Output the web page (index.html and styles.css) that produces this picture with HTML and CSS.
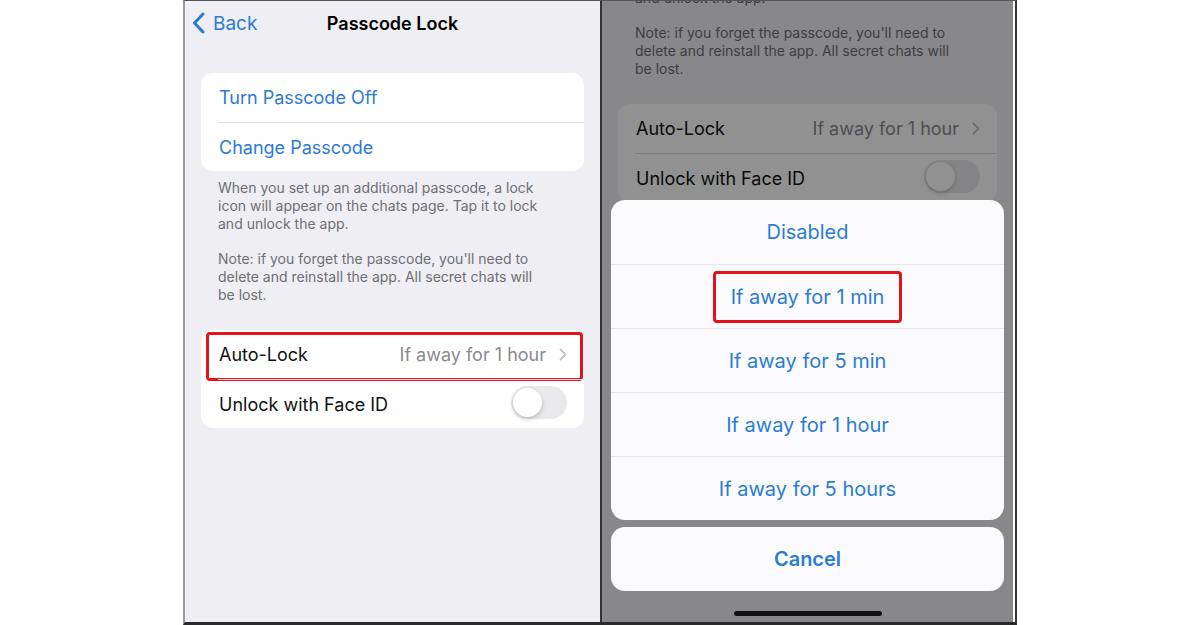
FILE: index.html
```html
<!DOCTYPE html>
<html lang="en">
<head>
    <meta charset="UTF-8">
    <meta name="viewport" content="width=device-width, initial-scale=1.0">
    <title>Passcode Lock</title>
    <link rel="stylesheet" href="styles.css">
</head>
<body>
    <div class="frame">
        <section class="phone">
            <div class="page">
                <header class="nav">
                    <a href="#" class="back">
                        <svg width="13" height="22" viewBox="0 0 13 22"><path d="M11 2 L2.5 11 L11 20" fill="none" stroke="currentColor" stroke-width="3" stroke-linecap="round" stroke-linejoin="round"/></svg>
                        Back
                    </a>
                    <h1>Passcode Lock</h1>
                </header>
                <div class="group">
                    <div class="row link">Turn Passcode Off</div>
                    <div class="row link">Change Passcode</div>
                </div>
                <div class="footnote">
                    <p>When you set up an additional passcode, a lock<br>icon will appear on the chats page. Tap it to lock<br>and unlock the app.</p>
                    <p>Note: if you forget the passcode, you'll need to<br>delete and reinstall the app. All secret chats will<br>be lost.</p>
                </div>
                <div class="group second">
                    <div class="row marked">
                        <span>Auto-Lock</span>
                        <span class="value">If away for 1 hour
                            <svg width="8" height="13" viewBox="0 0 8 13"><path d="M1.5 1.5 L6.5 6.5 L1.5 11.5" fill="none" stroke="currentColor" stroke-width="1.8" stroke-linecap="round" stroke-linejoin="round"/></svg>
                        </span>
                    </div>
                    <div class="row">
                        <span>Unlock with Face ID</span>
                        <span class="switch"><span class="knob"></span></span>
                    </div>
                </div>
            </div>
        </section>

        <section class="phone">
            <div class="page scrolled">
                <header class="nav">
                    <a href="#" class="back">
                        <svg width="13" height="22" viewBox="0 0 13 22"><path d="M11 2 L2.5 11 L11 20" fill="none" stroke="currentColor" stroke-width="3" stroke-linecap="round" stroke-linejoin="round"/></svg>
                        Back
                    </a>
                    <h1>Passcode Lock</h1>
                </header>
                <div class="group">
                    <div class="row link">Turn Passcode Off</div>
                    <div class="row link">Change Passcode</div>
                </div>
                <div class="footnote">
                    <p>When you set up an additional passcode, a lock<br>icon will appear on the chats page. Tap it to lock<br>and unlock the app.</p>
                    <p>Note: if you forget the passcode, you'll need to<br>delete and reinstall the app. All secret chats will<br>be lost.</p>
                </div>
                <div class="group second">
                    <div class="row">
                        <span>Auto-Lock</span>
                        <span class="value">If away for 1 hour
                            <svg width="8" height="13" viewBox="0 0 8 13"><path d="M1.5 1.5 L6.5 6.5 L1.5 11.5" fill="none" stroke="currentColor" stroke-width="1.8" stroke-linecap="round" stroke-linejoin="round"/></svg>
                        </span>
                    </div>
                    <div class="row">
                        <span>Unlock with Face ID</span>
                        <span class="switch"><span class="knob"></span></span>
                    </div>
                </div>
            </div>
            <div class="dim"></div>
            <div class="sheet">
                <div class="sheet-group">
                    <div class="sheet-item">Disabled</div>
                    <div class="sheet-item"><span class="picked">If away for 1 min</span></div>
                    <div class="sheet-item">If away for 5 min</div>
                    <div class="sheet-item">If away for 1 hour</div>
                    <div class="sheet-item">If away for 5 hours</div>
                </div>
                <div class="sheet-group">
                    <div class="sheet-item cancel">Cancel</div>
                </div>
            </div>
            <div class="home-bar"></div>
        </section>
    </div>
</body>
</html>
```

FILE: styles.css
```css
* {
    box-sizing: border-box;
}

body {
    margin: 0;
    background: #fff;
    font-family: Inter, 'Noto Sans', sans-serif;
    color: #111;
}

.frame {
    display: flex;
    width: 834px;
    height: 625px;
    margin-left: 183px;
    border-left: 2px solid #9a9a9a;
    border-top: 1px solid #555;
    border-right: 2px solid #333;
    border-bottom: 3px solid #2a2a2a;
}

.phone {
    position: relative;
    width: 415px;
    height: 100%;
    overflow: hidden;
    background: #efeef3;
}

.phone + .phone {
    width: 413px;
    border-left: 2px solid #333;
}

.page.scrolled {
    margin-top: -226px;
}

/* nav bar */
.nav {
    display: grid;
    grid-template-columns: 1fr auto 1fr;
    align-items: center;
    height: 44px;
    padding: 0 7px;
}

.back {
    display: flex;
    align-items: center;
    gap: 8px;
    color: #2b7bd3;
    font-size: 19px;
    text-decoration: none;
}

.nav h1 {
    margin: 0;
    font-size: 18px;
    font-weight: 600;
    color: #000;
}

/* grouped list */
.group {
    margin: 28px 16px 0;
    background: #fff;
    border-radius: 12px;
}

.group.second {
    margin-top: 26px;
}

.row {
    position: relative;
    display: flex;
    align-items: center;
    justify-content: space-between;
    height: 49px;
    margin-left: 17px;
    padding: 0 17px 0 1px;
    font-size: 18px;
}

.row + .row {
    border-top: 1px solid #dedee2;
}

.row.link {
    color: #2b7bd3;
}

.row.marked::after {
    content: '';
    position: absolute;
    top: 2px;
    bottom: -2px;
    left: -12px;
    right: 1px;
    border: 3px solid #e3121b;
    border-radius: 4px;
}

.value {
    display: flex;
    align-items: center;
    gap: 13px;
    color: #8a8a8f;
}

.value svg {
    color: #c2c2c6;
}

.switch {
    position: relative;
    width: 56px;
    height: 33px;
    margin-top: -4px;
    border-radius: 17px;
    background: #e9e9eb;
}

.knob {
    position: absolute;
    top: 2px;
    left: 2px;
    width: 29px;
    height: 29px;
    border-radius: 50%;
    background: #fff;
    box-shadow: 0 2px 5px rgba(0, 0, 0, 0.2);
}

.footnote {
    padding: 8px 33px 0;
    font-size: 14px;
    line-height: 18px;
    color: #6e6e73;
    white-space: nowrap;
}

.footnote p {
    margin: 0;
}

.footnote p + p {
    margin-top: 17px;
}

/* action sheet */
.dim {
    position: absolute;
    inset: 0;
    background: rgba(0, 0, 0, 0.43);
}

.sheet {
    position: absolute;
    left: 9px;
    right: 9px;
    bottom: 31px;
    display: flex;
    flex-direction: column;
    gap: 7px;
}

.sheet-group {
    background: #fbfbfd;
    border-radius: 14px;
    overflow: hidden;
}

.sheet-item {
    display: flex;
    align-items: center;
    justify-content: center;
    height: 64px;
    font-size: 20px;
    color: #2b7bd3;
}

.sheet-item + .sheet-item {
    border-top: 1px solid #e6e6e9;
}

.sheet-item.cancel {
    font-weight: 600;
}

.picked {
    padding: 11px 15px;
    border: 3px solid #e3121b;
    border-radius: 4px;
}

.home-bar {
    position: absolute;
    bottom: 6px;
    left: 50%;
    width: 148px;
    height: 5px;
    margin-left: -74px;
    border-radius: 3px;
    background: #111;
}
```
